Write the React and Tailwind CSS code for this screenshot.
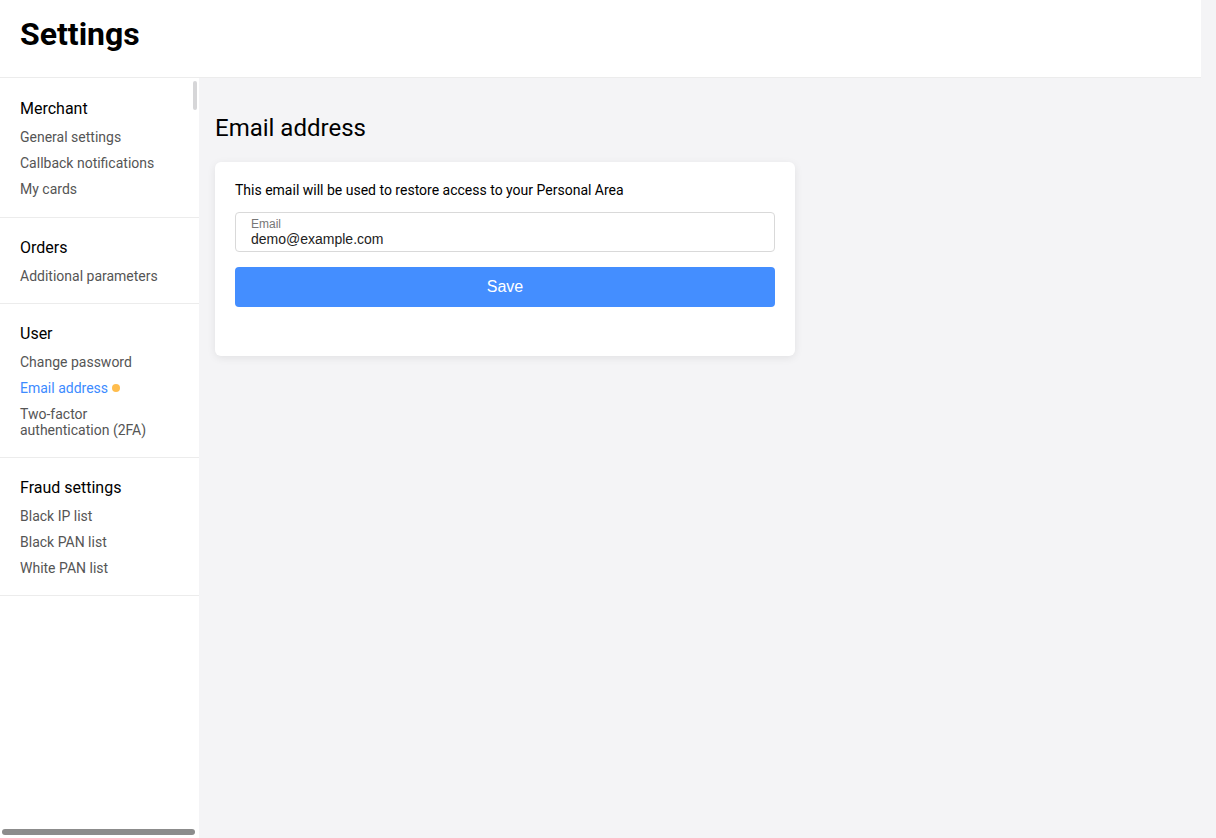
import React from "react";

const sections = [
  {
    title: "Merchant",
    items: ["General settings", "Callback notifications", "My cards"],
  },
  { title: "Orders", items: ["Additional parameters"] },
  {
    title: "User",
    items: ["Change password", "Email address", "Two-factor authentication (2FA)"],
  },
  {
    title: "Fraud settings",
    items: ["Black IP list", "Black PAN list", "White PAN list"],
  },
];

const Sidebar = () => {
  return (
    <aside className="relative w-[199px] shrink-0 bg-white">
      {sections.map((section, i) => (
        <div
          key={section.title}
          className={
            i === 0
              ? "border-b border-[#ececec] px-5 pt-[21px] pb-5"
              : "border-b border-[#ececec] px-5 pt-5 pb-[19px]"
          }
        >
          <h3 className="text-[16px] leading-5 text-black">{section.title}</h3>
          {section.items.map((item) => {
            const active = item === "Email address";
            return (
              <div
                key={item}
                className={
                  active
                    ? "mt-[10px] flex items-center gap-1 text-[14px] leading-4 text-[#3d8bff]"
                    : "mt-[10px] text-[14px] leading-4 text-[#555555]"
                }
              >
                <span className={item.startsWith("Two-factor") ? "block w-[130px]" : ""}>
                  {item}
                </span>
                {active && (
                  <span className="h-2 w-2 rounded-full bg-[#ffbd4d]" />
                )}
              </div>
            );
          })}
        </div>
      ))}
      {/* overlay scrollbars */}
      <div className="absolute top-[3px] right-[2px] h-[29px] w-[4px] rounded-full bg-[#d6d6d8]" />
      <div className="absolute bottom-[3px] left-[2px] h-[6px] w-[193px] rounded-full bg-[#8c8c8c]" />
    </aside>
  );
};

const EmailCard = () => {
  return (
    <div className="w-[580px] rounded-md bg-white px-5 pt-5 pb-[49px] shadow-[0_2px_8px_rgba(0,0,0,0.08)]">
      <p className="text-[14px] leading-4 text-black">
        This email will be used to restore access to your Personal Area
      </p>
      <div className="mt-[14px] flex h-10 flex-col justify-center rounded border border-[#d9d9d9] px-[15px] font-['Liberation_Sans',Arial,sans-serif]">
        <span className="text-[12px] leading-[13px] text-[#777777]">Email</span>
        <span className="text-[14px] leading-4 text-[#222222]">
          demo@example.com
        </span>
      </div>
      <button className="mt-[15px] flex h-10 w-full items-center justify-center rounded bg-[#448eff] font-['Liberation_Sans',Arial,sans-serif] text-[16px] font-medium text-white">
        Save
      </button>
    </div>
  );
};

export default function App() {
  return (
    <div className="flex h-[838px] w-[1216px] flex-col overflow-hidden bg-[#f4f4f6] font-['Roboto',sans-serif]">
      <header className="h-[78px] w-[1201px] shrink-0 border-b border-[#ececec] bg-white px-5 pt-[14px]">
        <h1 className="text-[32px] leading-10 font-bold text-black">Settings</h1>
      </header>
      <div className="flex min-h-0 flex-1">
        <Sidebar />
        <main className="flex-1 pt-[34px] pl-[16px]">
          <h2 className="text-[24px] leading-8 text-black">Email address</h2>
          <div className="mt-[18px]">
            <EmailCard />
          </div>
        </main>
      </div>
    </div>
  );
}
